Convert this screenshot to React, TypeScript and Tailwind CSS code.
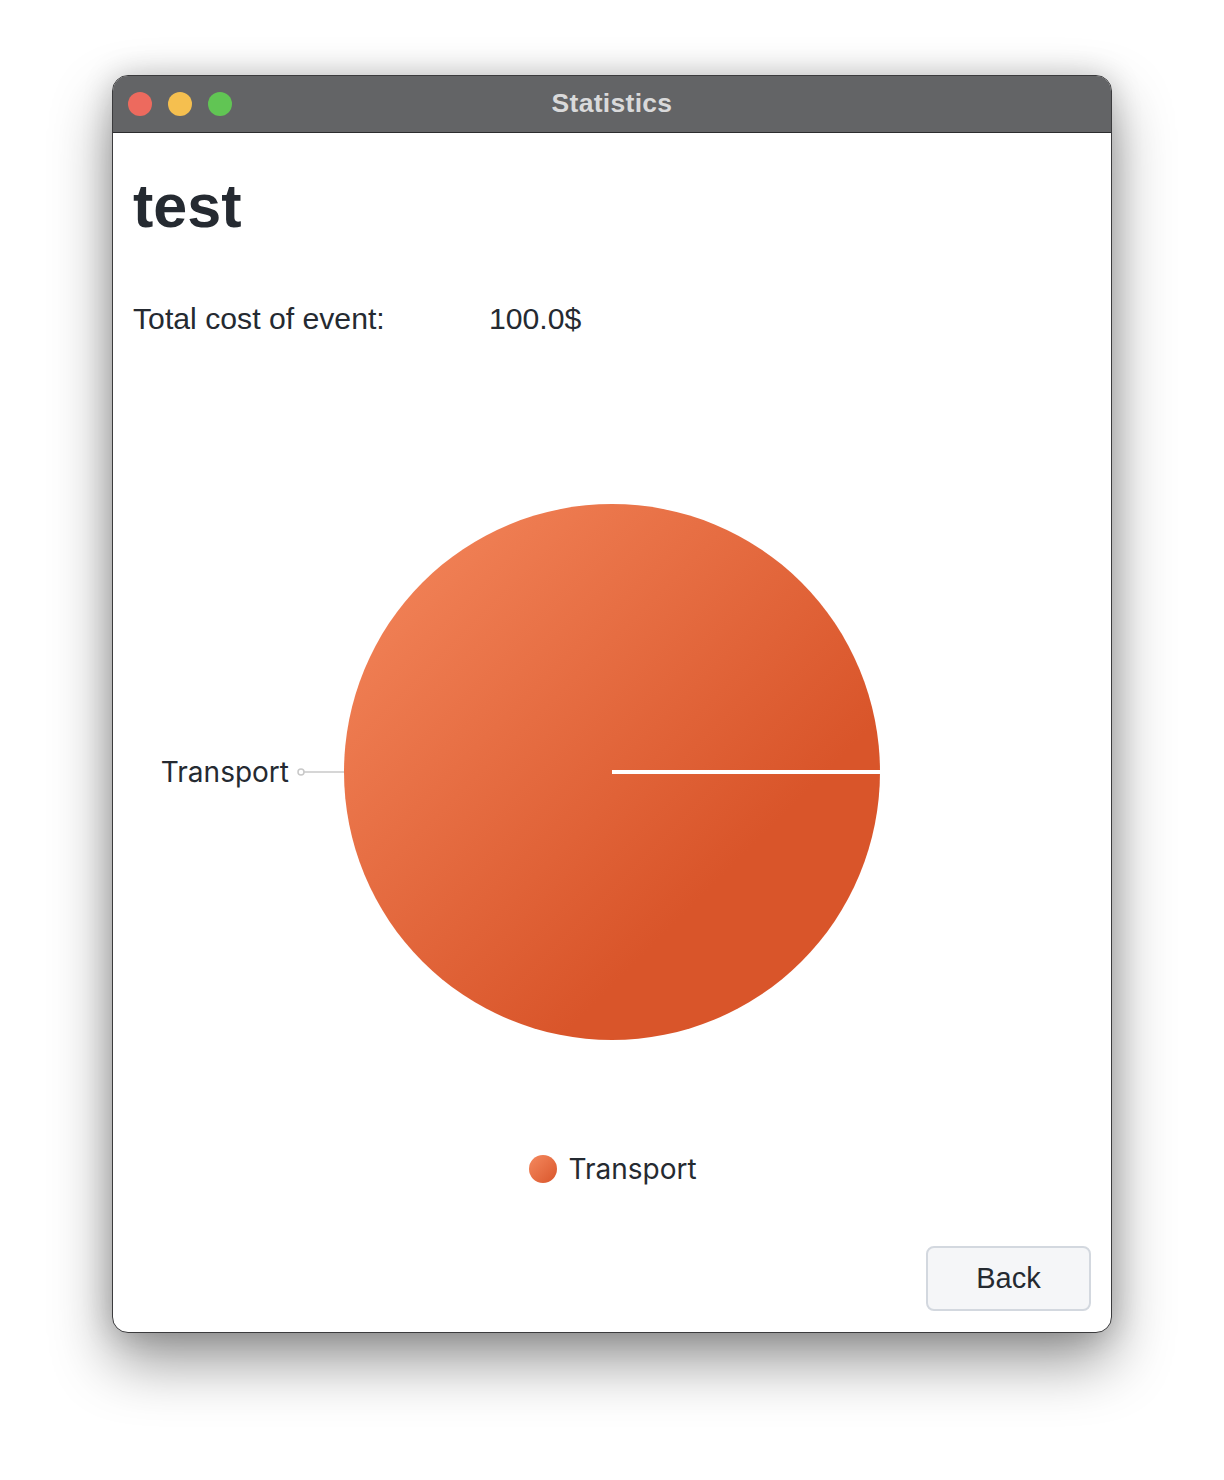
const TEXT = "#252a31";

function TrafficLights() {
  return (
    <div className="flex items-center gap-4 pl-[15px]">
      <span className="h-6 w-6 rounded-full bg-[#ed6a5e]" />
      <span className="h-6 w-6 rounded-full bg-[#f5bf4f]" />
      <span className="h-6 w-6 rounded-full bg-[#61c554]" />
    </div>
  );
}

function PieChart() {
  const cx = 499;
  const cy = 438;
  const r = 268;
  return (
    <svg width="998" height="772" viewBox="0 0 998 772" className="block">
      <defs>
        <linearGradient id="slice" x1="0" y1="0" x2="1" y2="1">
          <stop offset="0" stopColor="#f5895e" />
          <stop offset="0.7" stopColor="#d9552a" />
          <stop offset="1" stopColor="#d9552a" />
        </linearGradient>
      </defs>
      <text
        x="176"
        y={cy}
        textAnchor="end"
        dominantBaseline="central"
        fill={TEXT}
        style={{ fontFamily: "Inter, 'Noto Sans', sans-serif", fontSize: 28 }}
      >
        Transport
      </text>
      <circle cx="188" cy={cy} r="3" fill="none" stroke="#c8c8c8" strokeWidth="1.5" />
      <line x1="191" y1={cy} x2={cx - r} y2={cy} stroke="#c8c8c8" strokeWidth="1.5" />
      <circle cx={cx} cy={cy} r={r} fill="url(#slice)" />
      <line x1={cx} y1={cy} x2={cx + r + 1} y2={cy} stroke="#ffffff" strokeWidth="4" />
    </svg>
  );
}

export default function App() {
  return (
    <div className="h-[1480px] w-[1224px] bg-white pl-[112px] pt-[75px]">
      <div className="flex h-[1258px] w-[1000px] flex-col overflow-hidden rounded-[16px] border border-[#3b3b3d] bg-white shadow-[0_28px_60px_rgba(0,0,0,0.42),0_0_30px_rgba(0,0,0,0.18)]">
        {/* title bar */}
        <div className="relative flex h-[57px] shrink-0 items-center border-b border-[#2c2c2e] bg-[#636466]">
          <TrafficLights />
          <div className="absolute inset-0 flex items-center justify-center pb-[1px]">
            <span className="font-['Liberation_Sans',Arial,sans-serif] text-[26.5px] font-bold tracking-[0.3px] text-[#d9d9da]">
              Statistics
            </span>
          </div>
        </div>

        {/* content */}
        <div className="flex flex-1 flex-col" style={{ color: TEXT }}>
          <h1 className="ml-5 mt-[43px] font-['Liberation_Sans',Arial,sans-serif] text-[61px] font-bold leading-none">
            test
          </h1>

          <div className="ml-5 mt-[67px] flex font-['Liberation_Sans',Arial,sans-serif] text-[30.2px] leading-none">
            <span className="w-[356px]">Total cost of event:</span>
            <span>100.0$</span>
          </div>

          <PieChart />

          <div className="mt-[48px] flex items-center justify-center gap-[11px] pl-[2px] font-['Inter',sans-serif] text-[28px] leading-[30px]">
            <span className="h-[28px] w-[28px] rounded-full bg-gradient-to-br from-[#f5895e] to-[#d9552a]" />
            <span>Transport</span>
          </div>

          <div className="mr-5 mt-[62px] flex justify-end">
            <button className="h-[65px] w-[165px] rounded-[8px] border-2 border-[#d3d8df] bg-[#f5f6f8] font-['Liberation_Sans',Arial,sans-serif] text-[29px]">
              Back
            </button>
          </div>
        </div>
      </div>
    </div>
  );
}
